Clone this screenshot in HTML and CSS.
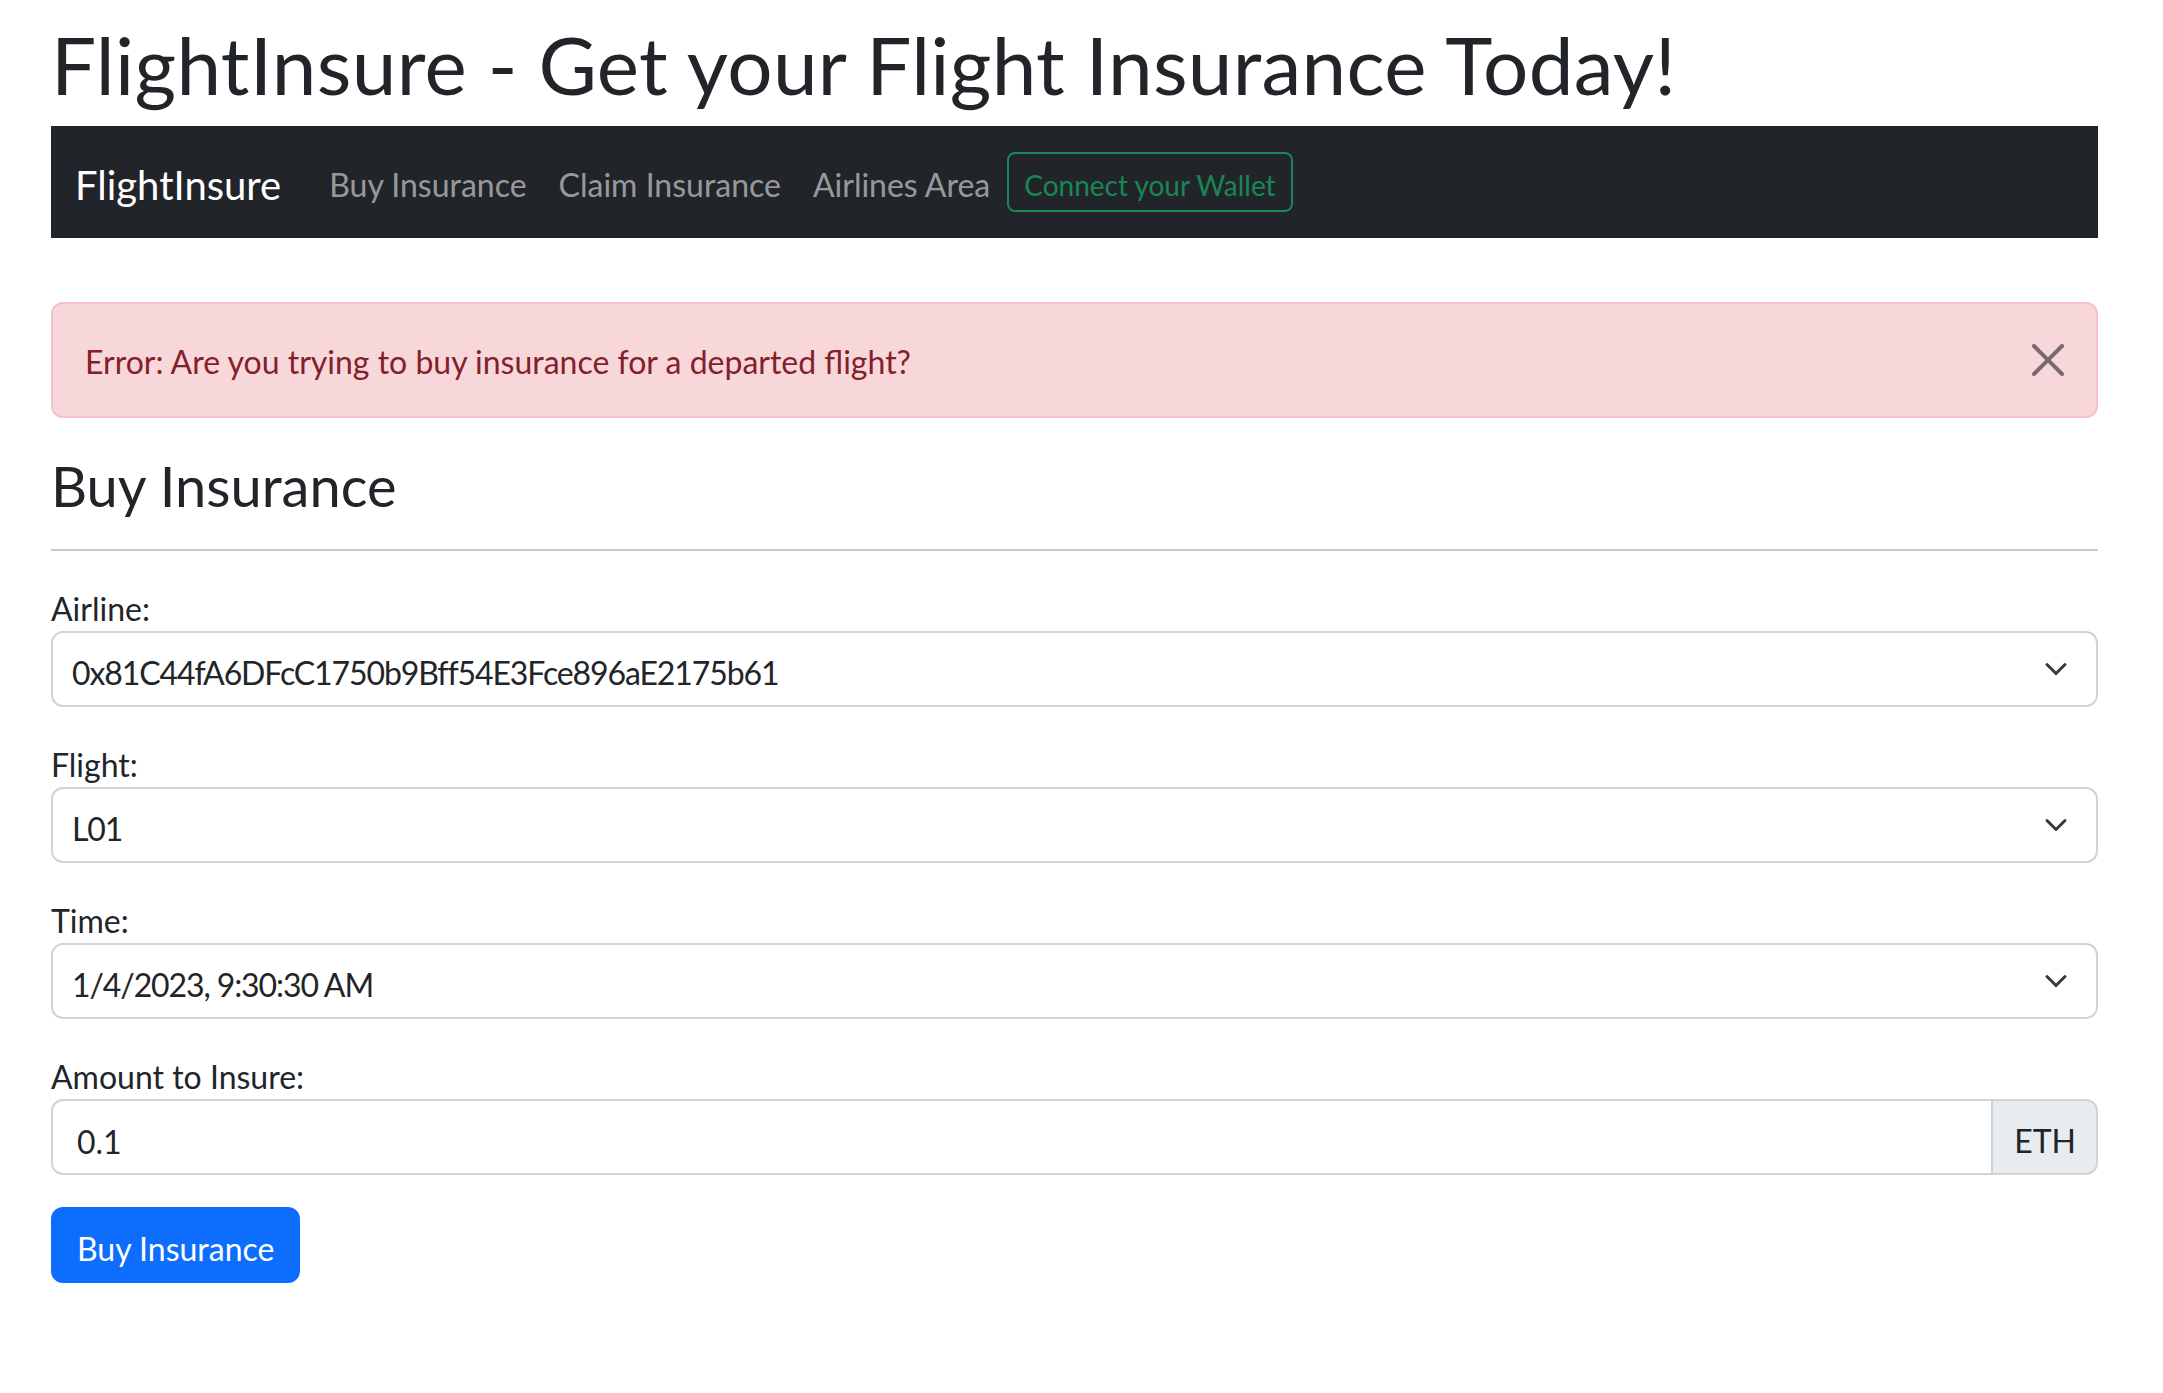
FILE: index.html
```html
<!DOCTYPE html>
<html lang="en">
<head>
<meta charset="utf-8">
<title>FlightInsure</title>
<link rel="stylesheet" href="styles.css">
</head>
<body>
<div class="page">
  <h1 class="title">FlightInsure - Get your Flight Insurance Today!</h1>

  <nav class="navbar">
    <a class="brand" href="#">FlightInsure</a>
    <ul class="nav">
      <li><a class="nav-link" href="#">Buy Insurance</a></li>
      <li><a class="nav-link" href="#">Claim Insurance</a></li>
      <li><a class="nav-link" href="#">Airlines Area</a></li>
    </ul>
    <button class="btn-wallet" type="button">Connect your Wallet</button>
  </nav>

  <div class="alert">
    <span class="alert-text">Error: Are you trying to buy insurance for a departed flight?</span>
    <button class="close" type="button" aria-label="Close">
      <svg viewBox="0 0 16 16" width="32" height="32"><path d="M.293.293a1 1 0 0 1 1.414 0L8 6.586 14.293.293a1 1 0 1 1 1.414 1.414L9.414 8l6.293 6.293a1 1 0 0 1-1.414 1.414L8 9.414l-6.293 6.293a1 1 0 0 1-1.414-1.414L6.586 8 .293 1.707a1 1 0 0 1 0-1.414z" fill="#000"/></svg>
    </button>
  </div>

  <h3 class="section-title">Buy Insurance</h3>
  <hr class="divider">

  <form class="form">
    <div class="field">
      <label class="label">Airline:</label>
      <div class="select"><span class="select-value">0x81C44fA6DFcC1750b9Bff54E3Fce896aE2175b61</span>
        <svg class="chevron" viewBox="0 0 16 16" width="32" height="24"><path d="m2 5 6 6 6-6" fill="none" stroke="#343a40" stroke-width="2" stroke-linecap="round" stroke-linejoin="round"/></svg>
      </div>
    </div>
    <div class="field">
      <label class="label">Flight:</label>
      <div class="select"><span class="select-value">L01</span>
        <svg class="chevron" viewBox="0 0 16 16" width="32" height="24"><path d="m2 5 6 6 6-6" fill="none" stroke="#343a40" stroke-width="2" stroke-linecap="round" stroke-linejoin="round"/></svg>
      </div>
    </div>
    <div class="field">
      <label class="label">Time:</label>
      <div class="select"><span class="select-value">1/4/2023, 9:30:30 AM</span>
        <svg class="chevron" viewBox="0 0 16 16" width="32" height="24"><path d="m2 5 6 6 6-6" fill="none" stroke="#343a40" stroke-width="2" stroke-linecap="round" stroke-linejoin="round"/></svg>
      </div>
    </div>
    <div class="field">
      <label class="label">Amount to Insure:</label>
      <div class="input-group">
        <input class="input" type="text" value="0.1">
        <span class="addon">ETH</span>
      </div>
    </div>
    <button class="btn-primary" type="button">Buy Insurance</button>
  </form>
</div>
</body>
</html>
```

FILE: styles.css
```css
* { box-sizing: border-box; }

html, body {
  margin: 0;
  padding: 0;
  background: #fff;
}

body {
  font-family: "Lato", "Open Sans", sans-serif;
  font-size: 32px;
  line-height: 48px;
  color: #212529;
}

.page {
  margin: 0 65px 0 51px;
  padding-top: 14px;
}

.title {
  font-size: 80px;
  line-height: 91px;
  padding-top: 5px;
  font-weight: 400;
  letter-spacing: 0.3px;
  margin: 0 0 16px 0;
}

/* Navbar */
.navbar {
  display: flex;
  align-items: center;
  height: 112px;
  padding: 16px 24px;
  background: #212529;
}

.brand {
  font-size: 40px;
  line-height: 60px;
  padding: 13px 0 7px;
  margin-right: 32px;
  color: #fff;
  text-decoration: none;
}

.nav {
  display: flex;
  list-style: none;
  margin: 0;
  padding: 0;
}

.nav-link {
  display: block;
  padding: 19px 16px 13px;
  color: rgba(255, 255, 255, 0.55);
  text-decoration: none;
}

.btn-wallet {
  margin-left: 1px;
  font-family: inherit;
  font-size: 28px;
  line-height: 40px;
  padding: 11px 15px 5px;
  color: #198754;
  background: transparent;
  border: 2px solid #198754;
  border-radius: 8px;
}

/* Alert */
.alert {
  display: flex;
  align-items: center;
  justify-content: space-between;
  margin-top: 64px;
  margin-bottom: 32px;
  padding: 32px;
  color: #842029;
  background: #f8d7da;
  border: 2px solid #f5c2c7;
  border-radius: 12px;
}

.alert-text {
  padding-top: 4px;
  line-height: 44px;
}

.close {
  display: flex;
  padding: 0;
  border: 0;
  background: transparent;
  opacity: 0.5;
}

/* Section */
.section-title {
  font-size: 56px;
  line-height: 63px;
  padding-top: 4px;
  font-weight: 400;
  margin: 0;
}

.divider {
  margin: 32px 0;
  border: 0;
  border-top: 2px solid #212529;
  opacity: 0.25;
}

/* Form */
.field {
  margin-bottom: 32px;
}

.label {
  display: block;
  padding-top: 4px;
  line-height: 44px;
}

.select {
  display: flex;
  align-items: center;
  height: 76px;
  padding: 8px 24px 0 19px;
  border: 2px solid #ced4da;
  border-radius: 12px;
  background: #fff;
}

.select-value {
  flex: 1;
  letter-spacing: -1.1px;
}

.chevron {
  margin-top: -8px;
}

.input-group {
  display: flex;
}

.input {
  flex: 1;
  min-width: 0;
  height: 76px;
  padding: 16px 24px 8px;
  font-family: inherit;
  font-size: 32px;
  line-height: 48px;
  color: #212529;
  border: 2px solid #ced4da;
  border-radius: 12px 0 0 12px;
  outline: none;
}

.addon {
  margin-left: -2px;
  padding: 16px 20px 8px 21px;
  background: #e9ecef;
  border: 2px solid #ced4da;
  border-radius: 0 12px 12px 0;
}

.btn-primary {
  font-family: inherit;
  font-size: 32px;
  line-height: 48px;
  padding: 16px 24px 8px;
  color: #fff;
  background: #0d6efd;
  border: 2px solid #0d6efd;
  border-radius: 12px;
}
```
